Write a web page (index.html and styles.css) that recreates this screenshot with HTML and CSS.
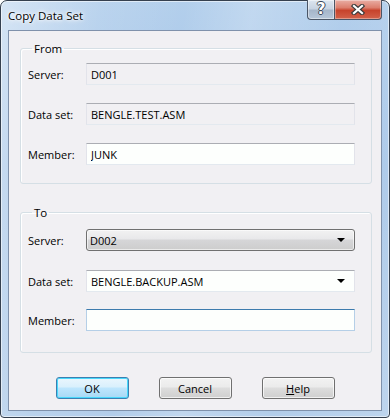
FILE: index.html
```html
<!DOCTYPE html>
<html lang="en">
<head>
    <meta charset="UTF-8">
    <meta name="viewport" content="width=device-width, initial-scale=1.0">
    <title>Copy Data Set</title>
    <link rel="stylesheet" href="styles.css">
</head>
<body>

    <div class="window">
        <div class="titlebar">
            <span class="title">Copy Data Set</span>
            <div class="caption-buttons">
                <button class="cap help-cap"><span>?</span></button>
                <button class="cap close-cap">
                    <svg width="14" height="11" viewBox="0 0 14 11">
                        <path d="M3 2 L11 9 M11 2 L3 9" stroke="#3b3b3b" stroke-width="4.4" stroke-linecap="square"/>
                        <path d="M3 2 L11 9 M11 2 L3 9" stroke="#ffffff" stroke-width="2.2" stroke-linecap="square"/>
                    </svg>
                </button>
            </div>
        </div>

        <div class="client">
            <fieldset class="group from">
                <legend>From</legend>
                <div class="row">
                    <label for="fromServer">Server:</label>
                    <input type="text" id="fromServer" class="field readonly" value="D001" readonly>
                </div>
                <div class="row">
                    <label for="fromDataSet">Data set:</label>
                    <input type="text" id="fromDataSet" class="field readonly" value="BENGLE.TEST.ASM" readonly>
                </div>
                <div class="row">
                    <label for="fromMember">Member:</label>
                    <input type="text" id="fromMember" class="field" value="JUNK">
                </div>
            </fieldset>

            <fieldset class="group to">
                <legend>To</legend>
                <div class="row">
                    <label>Server:</label>
                    <div class="combo dropdown">
                        <span class="combo-text">D002</span>
                        <span class="arrow"></span>
                    </div>
                </div>
                <div class="row">
                    <label>Data set:</label>
                    <div class="combo editable">
                        <span class="combo-text">BENGLE.BACKUP.ASM</span>
                        <span class="arrow"></span>
                    </div>
                </div>
                <div class="row">
                    <label for="toMember">Member:</label>
                    <input type="text" id="toMember" class="field focused" value="">
                </div>
            </fieldset>

            <div class="buttons">
                <button class="btn default">OK</button>
                <button class="btn">Cancel</button>
                <button class="btn"><u>H</u>elp</button>
            </div>
        </div>
    </div>

</body>
</html>
```

FILE: styles.css
```css
*{
    box-sizing: border-box;
    margin: 0;
    padding: 0;
}

body{
    width: 390px;
    height: 418px;
    font-family: "Open Sans", "Segoe UI", sans-serif;
    font-size: 11px;
    color: #000000;
    background: #ffffff;
}

.window{
    display: flex;
    flex-direction: column;
    width: 390px;
    height: 418px;
    padding: 0 7px 6px 7px;
    border: 1px solid #35404f;
    border-radius: 7px 7px 4px 4px;
    background:
        linear-gradient(100deg, rgba(255,255,255,0.45) 0%, rgba(255,255,255,0.1) 22%, rgba(255,255,255,0) 40%, rgba(255,255,255,0.2) 55%, rgba(255,255,255,0) 75%, rgba(255,255,255,0.15) 100%),
        linear-gradient(to bottom, #b3cfec, #a7c6e8 40%, #b2cdea);
    box-shadow: inset 0 0 0 1px rgba(255,255,255,0.55);
}

.titlebar{
    display: flex;
    height: 29px;
}

.title{
    padding-top: 7px;
    font-size: 11.5px;
    text-shadow: 0 0 7px #ffffff, 0 0 4px #ffffff, 0 0 2px #ffffff;
}

.caption-buttons{
    display: flex;
    height: 20px;
    margin-top: -1px;
    margin-left: auto;
}

.cap{
    display: flex;
    justify-content: center;
    align-items: center;
    height: 20px;
    border: 1px solid #4a5566;
    border-top: none;
    cursor: default;
}

.help-cap{
    width: 27px;
    border-right: none;
    border-radius: 0 0 0 4px;
    background: linear-gradient(to bottom, #dde6f0 0%, #c8d4e2 45%, #a6b6ca 55%, #b6c6d9 100%);
    box-shadow: inset 0 0 0 1px rgba(255,255,255,0.45);
}

.help-cap span{
    font-family: "DejaVu Sans", sans-serif;
    font-size: 15px;
    font-weight: bold;
    color: #ffffff;
    line-height: 1;
    text-shadow: -1px 0 #3b4656, 1px 0 #3b4656, 0 -1px #3b4656, 0 1px #3b4656;
}

.close-cap{
    width: 48px;
    border-radius: 0 0 4px 0;
    background: linear-gradient(to bottom, #e9aea4 0%, #dc7f6e 40%, #c7432c 55%, #d2624a 100%);
    box-shadow: inset 0 0 0 1px rgba(255,255,255,0.35);
}

.client{
    flex: 1;
    padding: 0 0 0 11px;
    border: 1px solid #7f91ab;
    background: #f1f0f3;
}

.group{
    width: 352px;
    padding: 7px 15px 18px 7px;
    border: 1px solid #d5dfe5;
    border-radius: 3px;
    box-shadow: inset 1px 1px 0 #ffffff;
}

.from{
    margin-top: 10px;
}

.to{
    margin-top: 21px;
    padding-top: 9px;
    padding-bottom: 21px;
}

legend{
    margin-left: 4px;
    padding: 0 2px;
    font-size: 11.5px;
    line-height: 15px;
}

.row{
    display: flex;
    align-items: center;
    height: 22px;
    margin-top: 18px;
}

.row:first-of-type{
    margin-top: 0;
}

.to .row:nth-of-type(2){
    margin-top: 19px;
}

.to .row:nth-of-type(3){
    margin-top: 17px;
}

.row label{
    width: 58px;
}

.field{
    width: 269px;
    height: 22px;
    padding: 0 4px;
    border: 1px solid #e2e3ea;
    border-top-color: #abadb3;
    border-bottom-color: #e3e9ef;
    background: #fdfffd;
    font-family: inherit;
    font-size: inherit;
    color: #000000;
    outline: none;
}

.readonly{
    background: #f1f0f3;
}

.focused{
    border-color: #b5cfe7;
    border-top-color: #3d7bad;
}

.combo{
    display: flex;
    align-items: center;
    width: 269px;
    height: 22px;
    padding: 0 9px 0 4px;
}

.dropdown{
    padding-left: 3px;
    border: 1px solid #707070;
    border-radius: 3px;
    background: linear-gradient(to bottom, #f2f2f2 0%, #e8e8ea 45%, #d6d6d8 50%, #cdcdcd 100%);
    box-shadow: inset 0 0 0 1px rgba(255,255,255,0.6);
}

.editable{
    border: 1px solid #e2e3ea;
    border-top-color: #abadb3;
    border-bottom-color: #e3e9ef;
    background: #fdfffd;
}

.combo-text{
    flex: 1;
}

.arrow{
    width: 0;
    height: 0;
    border-left: 4px solid transparent;
    border-right: 4px solid transparent;
    border-top: 4px solid #000000;
}

.buttons{
    display: flex;
    justify-content: center;
    gap: 30px;
    margin-top: 24px;
    padding-right: 11px;
}

.btn{
    width: 73px;
    height: 22px;
    border: 1px solid #707070;
    border-radius: 3px;
    background: linear-gradient(to bottom, #f2f2f2 0%, #ebebeb 45%, #dddddd 50%, #cfcfcf 100%);
    box-shadow: inset 0 0 0 1px rgba(255,255,255,0.7);
    font-family: inherit;
    font-size: inherit;
    color: #000000;
    cursor: pointer;
}

.btn u{
    text-decoration: underline;
}

.default{
    border-color: #3c7fb1;
    background: linear-gradient(to bottom, #eaf6fd 0%, #d9f0fc 45%, #bee6fd 50%, #a7d9f5 100%);
    box-shadow: inset 0 0 0 1px #48d8fb;
}
```
